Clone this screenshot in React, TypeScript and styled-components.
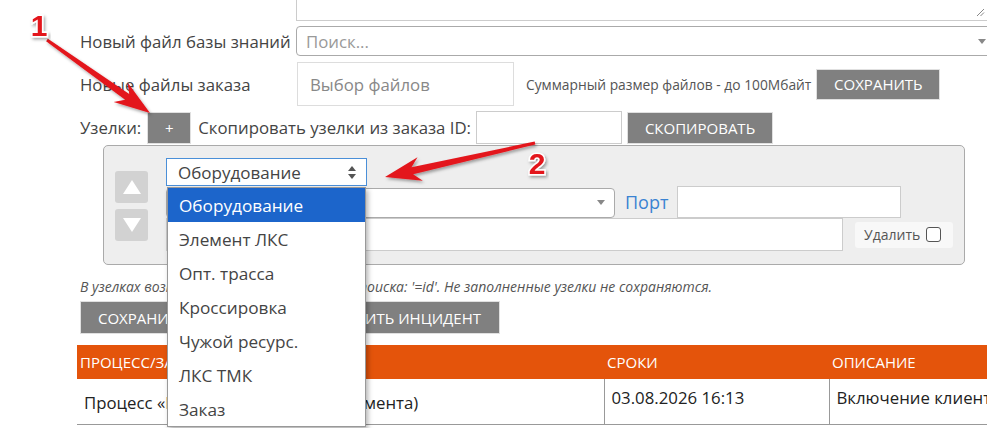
import React from "react";
import styled, { createGlobalStyle } from "styled-components";

const GlobalStyle = createGlobalStyle`
  html, body {
    margin: 0;
    padding: 0;
    background: #fff;
    overflow: hidden;
  }
  body {
    font-family: "Open Sans", "Noto Sans", sans-serif;
    color: #444;
  }
  * {
    box-sizing: border-box;
  }
`;

const TYPES = [
  "Оборудование",
  "Элемент ЛКС",
  "Опт. трасса",
  "Кроссировка",
  "Чужой ресурс.",
  "ЛКС ТМК",
  "Заказ",
];

type Pt = [number, number];

// arrow polygon from tail to tip, tapering shaft and barbed head
function arrowPoints(tail: Pt, tip: Pt): string {
  const dx = tip[0] - tail[0];
  const dy = tip[1] - tail[1];
  const len = Math.hypot(dx, dy);
  const u: Pt = [dx / len, dy / len];
  const n: Pt = [-u[1], u[0]];
  const at = (back: number, side: number): string => {
    const x = tip[0] - u[0] * back + n[0] * side;
    const y = tip[1] - u[1] * back + n[1] * side;
    return `${x.toFixed(1)},${y.toFixed(1)}`;
  };
  return [
    at(len, -1.5),
    at(28, -3.6),
    at(36, -12),
    at(0, 0),
    at(36, 12),
    at(28, 3.6),
    at(len, 1.5),
  ].join(" ");
}

export default function App() {
  return (
    <Page>
      <GlobalStyle />

      <TextareaStub>
        <svg width="9" height="9" viewBox="0 0 9 9">
          <path d="M1 8 L8 1 M4.5 8 L8 4.5" stroke="#888" strokeWidth="1" />
        </svg>
      </TextareaStub>

      <FormRow $top={5}>
        <Label>Новый файл базы знаний</Label>
        <SearchSelect>
          <span>Поиск...</span>
          <Caret />
        </SearchSelect>
      </FormRow>

      <FormRow $top={6}>
        <Label>Новые файлы заказа</Label>
        <FileBox>Выбор файлов</FileBox>
        <Hint>Суммарный размер файлов - до 100Мбайт</Hint>
        <GrayButton $w={124} $h={31} style={{ marginLeft: 5 }}>
          СОХРАНИТЬ
        </GrayButton>
      </FormRow>

      <FormRow $top={5}>
        <InlineLabel>Узелки:</InlineLabel>
        <GrayButton $w={44} $h={32} style={{ marginLeft: 6 }}>
          +
        </GrayButton>
        <InlineLabel style={{ marginLeft: 7 }}>
          Скопировать узелки из заказа ID:
        </InlineLabel>
        <TextInput $w={146} $h={33} style={{ marginLeft: 5 }} />
        <GrayButton $w={146} $h={32} style={{ marginLeft: 5 }}>
          СКОПИРОВАТЬ
        </GrayButton>
      </FormRow>

      <NodePanel>
        <MoveColumn>
          <MoveButton>
            <svg width="18" height="14" viewBox="0 0 18 14">
              <polygon points="9,0 18,14 0,14" fill="#fff" />
            </svg>
          </MoveButton>
          <MoveButton>
            <svg width="18" height="14" viewBox="0 0 18 14">
              <polygon points="0,0 18,0 9,14" fill="#fff" />
            </svg>
          </MoveButton>
        </MoveColumn>

        <NodeFields>
          <TypeSelectWrap>
            <TypeSelect>
              <span>Оборудование</span>
              <svg width="8" height="13" viewBox="0 0 8 13">
                <polygon points="4,0 8,5 0,5" fill="#555" />
                <polygon points="0,8 8,8 4,13" fill="#555" />
              </svg>
            </TypeSelect>
            <DropList>
              {TYPES.map((t, i) => (
                <DropItem key={t} $active={i === 0}>
                  {t}
                </DropItem>
              ))}
            </DropList>
          </TypeSelectWrap>

          <FieldRow>
            <NodeSelect>
              <Caret />
            </NodeSelect>
            <PortLabel>Порт</PortLabel>
            <TextInput $w={224} $h={32} style={{ marginLeft: 9 }} />
          </FieldRow>

          <FieldRow>
            <TextInput $w={677} $h={33} />
            <DeleteBox>
              Удалить
              <CheckBox />
            </DeleteBox>
          </FieldRow>
        </NodeFields>
      </NodePanel>

      <Note>
        В узелках возможен ввод номера узла для поиска: '=id'. Не заполненные
        узелки не сохраняются.
      </Note>

      <ButtonRow>
        <GrayButton $h={33} $pad={17}>
          СОХРАНИТЬ
        </GrayButton>
        <GrayButton $h={33} $pad={18}>
          ДОБАВИТЬ ИНЦИДЕНТ
        </GrayButton>
      </ButtonRow>

      <Table>
        <thead>
          <tr>
            <HeadCell $w={527}>ПРОЦЕСС/ЗАДАЧА</HeadCell>
            <HeadCell $w={225}>СРОКИ</HeadCell>
            <HeadCell>ОПИСАНИЕ</HeadCell>
          </tr>
        </thead>
        <tbody>
          <tr>
            <BodyCell $middle>Процесс «Включение SIP» (без элемента)</BodyCell>
            <BodyCell>03.08.2026 16:13</BodyCell>
            <BodyCell>Включение клиента</BodyCell>
          </tr>
        </tbody>
      </Table>

      <Annotations width="987" height="428" viewBox="0 0 987 428">
        <defs>
          <filter id="shadow" x="-20%" y="-20%" width="140%" height="140%">
            <feDropShadow dx="1.5" dy="2" stdDeviation="1.5" floodColor="#000" floodOpacity="0.35" />
          </filter>
        </defs>
        <polygon points={arrowPoints([47, 40], [150, 113])} fill="#e3161c" filter="url(#shadow)" />
        <polygon points={arrowPoints([535, 143], [385, 177])} fill="#e3161c" filter="url(#shadow)" />
        <NumberMark x="39" y="36" filter="url(#shadow)">1</NumberMark>
        <NumberMark x="537" y="174" filter="url(#shadow)">2</NumberMark>
      </Annotations>
    </Page>
  );
}

const Page = styled.div`
  position: relative;
  width: 987px;
  height: 428px;
  overflow: hidden;
  padding-left: 80px;
`;

const TextareaStub = styled.div`
  margin-left: 216px;
  width: 692px;
  height: 21px;
  border: 1px solid #ccc;
  border-top: none;
  display: flex;
  justify-content: flex-end;
  align-items: flex-end;
  padding: 0 2px 3px 0;
`;

const FormRow = styled.div<{ $top: number }>`
  display: flex;
  align-items: center;
  margin-top: ${({ $top }) => $top}px;
  white-space: nowrap;
`;

const Label = styled.div`
  width: 216px;
  flex-shrink: 0;
  font-size: 16.8px;
  color: #444;
`;

const InlineLabel = styled.span`
  font-size: 16.8px;
  color: #444;
  flex-shrink: 0;
`;

const SearchSelect = styled.div`
  width: 705px;
  height: 30px;
  border: 1px solid #aaa;
  border-radius: 4px;
  display: flex;
  align-items: center;
  justify-content: space-between;
  padding: 0 14px 0 9px;
  font-size: 16.8px;
  color: #999;
  flex-shrink: 0;
`;

const Caret = styled.span`
  width: 0;
  height: 0;
  border-left: 4px solid transparent;
  border-right: 4px solid transparent;
  border-top: 5px solid #888;
`;

const FileBox = styled.div`
  width: 217px;
  height: 44px;
  margin-left: 1px;
  border: 1px solid #ddd;
  display: flex;
  align-items: center;
  padding-left: 12px;
  font-size: 16.8px;
  color: #888;
  flex-shrink: 0;
`;

const Hint = styled.span`
  margin-left: 12px;
  font-size: 13.8px;
  color: #555;
  flex-shrink: 0;
`;

const GrayButton = styled.div<{ $w?: number; $h: number; $pad?: number }>`
  ${({ $w }) => ($w ? `width: ${$w}px;` : "")}
  height: ${({ $h }) => $h}px;
  padding: 0 ${({ $pad }) => $pad ?? 0}px;
  background: #808080;
  border: 1px solid #e0e0e0;
  color: #fff;
  font-size: 15px;
  display: flex;
  align-items: center;
  justify-content: center;
  flex-shrink: 0;
`;

const TextInput = styled.div<{ $w: number; $h: number }>`
  width: ${({ $w }) => $w}px;
  height: ${({ $h }) => $h}px;
  background: #fff;
  border: 1px solid #ccc;
  flex-shrink: 0;
`;

const NodePanel = styled.div`
  margin: 1px 0 0 23px;
  width: 862px;
  height: 120px;
  border: 1px solid #aaa;
  border-radius: 5px;
  background: #eeeeee;
  display: flex;
  padding-left: 11px;
`;

const MoveColumn = styled.div`
  display: flex;
  flex-direction: column;
  justify-content: center;
  gap: 6px;
  padding-top: 1px;
`;

const MoveButton = styled.div`
  width: 33px;
  height: 32px;
  border-radius: 3px;
  background: #d2d2d2;
  display: flex;
  align-items: center;
  justify-content: center;
`;

const NodeFields = styled.div`
  margin-left: 18px;
  padding-top: 12px;
  display: flex;
  flex-direction: column;
`;

const TypeSelectWrap = styled.div`
  position: relative;
  width: 201px;
  z-index: 2;
`;

const TypeSelect = styled.div`
  height: 28px;
  background: #fff;
  border: 1px solid #4a8fd8;
  display: flex;
  align-items: center;
  justify-content: space-between;
  padding: 0 10px 0 11px;
  font-size: 17px;
  color: #444;
`;

const DropList = styled.div`
  position: absolute;
  top: 29px;
  left: 1px;
  width: 199px;
  background: #fff;
  border: 1px solid #999;
  box-shadow: 2px 3px 5px rgba(0, 0, 0, 0.3);
`;

const DropItem = styled.div<{ $active?: boolean }>`
  height: 34px;
  display: flex;
  align-items: center;
  padding-left: 11px;
  font-size: 17.2px;
  color: ${({ $active }) => ($active ? "#fff" : "#444")};
  background: ${({ $active }) => ($active ? "#1c65cb" : "#fff")};
`;

const FieldRow = styled.div`
  display: flex;
  align-items: center;
`;

const NodeSelect = styled.div`
  width: 449px;
  height: 30px;
  margin-top: 1px;
  background: #fff;
  border: 1px solid #aaa;
  border-radius: 4px;
  display: flex;
  align-items: center;
  justify-content: flex-end;
  padding-right: 9px;
`;

const PortLabel = styled.span`
  margin-left: 10px;
  font-size: 18px;
  color: #3a83d2;
`;

const DeleteBox = styled.div`
  margin-left: 12px;
  width: 98px;
  height: 26px;
  border-radius: 3px;
  background: #f8f8f8;
  display: flex;
  align-items: center;
  justify-content: space-between;
  padding: 0 12px 0 9px;
  font-size: 14px;
  color: #555;
`;

const CheckBox = styled.span`
  width: 15px;
  height: 15px;
  border: 1.5px solid #555;
  border-radius: 3px;
  background: #fff;
`;

const Note = styled.div`
  margin-top: 12px;
  font-size: 14px;
  font-style: italic;
  color: #555;
  white-space: nowrap;
`;

const ButtonRow = styled.div`
  margin-top: 5px;
  width: 420px;
  display: flex;
  justify-content: space-between;
`;

const Table = styled.table`
  margin: 11px 0 0 -3px;
  width: 1000px;
  border-collapse: collapse;
  table-layout: fixed;
`;

const HeadCell = styled.th<{ $w?: number }>`
  ${({ $w }) => ($w ? `width: ${$w}px;` : "")}
  height: 34px;
  padding: 0 3px;
  background: #e4540b;
  color: #fff;
  font-size: 15px;
  font-weight: 400;
  text-align: left;
  white-space: nowrap;
  overflow: hidden;
`;

const BodyCell = styled.td<{ $middle?: boolean }>`
  height: 45px;
  padding: ${({ $middle }) => ($middle ? "2px 7px 0" : "7px 7px 0")};
  vertical-align: ${({ $middle }) => ($middle ? "middle" : "top")};
  font-size: 16.8px;
  color: #222;
  border-left: 1px solid #999;
  border-bottom: 1px solid #999;
  white-space: nowrap;
  overflow: hidden;

  &:first-child {
    border-left: none;
  }
`;

const Annotations = styled.svg`
  position: absolute;
  left: 0;
  top: 0;
  pointer-events: none;
  z-index: 5;
`;

const NumberMark = styled.text`
  font-family: "Liberation Sans", Arial, sans-serif;
  font-weight: 700;
  font-size: 30px;
  text-anchor: middle;
  fill: #e3161c;
  stroke: #fff;
  stroke-width: 3px;
  paint-order: stroke;
`;
